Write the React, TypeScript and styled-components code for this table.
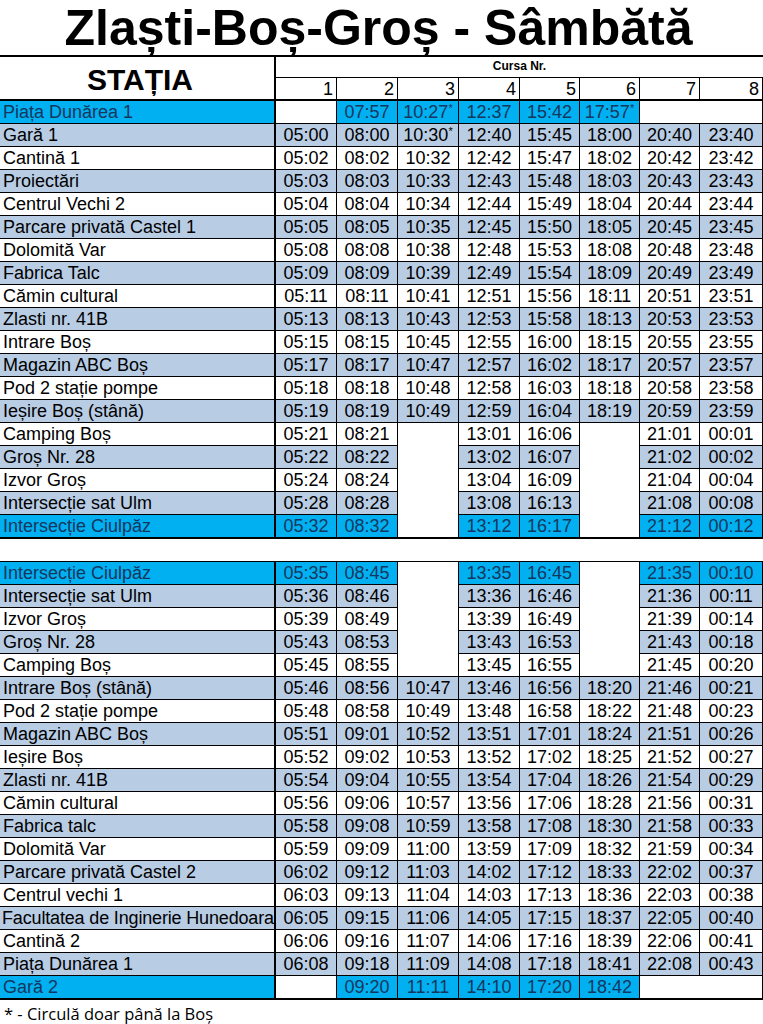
import React from "react";
import styled, { createGlobalStyle } from "styled-components";

const GlobalStyle = createGlobalStyle`
  html, body {
    margin: 0;
    padding: 0;
    background: #ffffff;
  }
  body {
    font-family: "Liberation Sans", Arial, sans-serif;
    color: #000;
  }
`;

type Tone = "white" | "light" | "bright";

type Stop = {
  name: string;
  tone: Tone;
  times: (string | null)[];
};

const COLS = "276px 61px 61px 61px 61px 60px 60px 60px 63px";

const toneBg: Record<Tone, string> = {
  white: "#ffffff",
  light: "#b8cce4",
  bright: "#00b0f0",
};

const toneInk: Record<Tone, string> = {
  white: "#000000",
  light: "#000000",
  bright: "#17365d",
};

const outbound: Stop[] = [
  { name: "Piața Dunărea 1", tone: "bright", times: [null, "07:57", "10:27*", "12:37", "15:42", "17:57*", null, null] },
  { name: "Gară 1", tone: "light", times: ["05:00", "08:00", "10:30*", "12:40", "15:45", "18:00", "20:40", "23:40"] },
  { name: "Cantină 1", tone: "white", times: ["05:02", "08:02", "10:32", "12:42", "15:47", "18:02", "20:42", "23:42"] },
  { name: "Proiectări", tone: "light", times: ["05:03", "08:03", "10:33", "12:43", "15:48", "18:03", "20:43", "23:43"] },
  { name: "Centrul Vechi 2", tone: "white", times: ["05:04", "08:04", "10:34", "12:44", "15:49", "18:04", "20:44", "23:44"] },
  { name: "Parcare privată Castel 1", tone: "light", times: ["05:05", "08:05", "10:35", "12:45", "15:50", "18:05", "20:45", "23:45"] },
  { name: "Dolomită Var", tone: "white", times: ["05:08", "08:08", "10:38", "12:48", "15:53", "18:08", "20:48", "23:48"] },
  { name: "Fabrica Talc", tone: "light", times: ["05:09", "08:09", "10:39", "12:49", "15:54", "18:09", "20:49", "23:49"] },
  { name: "Cămin cultural", tone: "white", times: ["05:11", "08:11", "10:41", "12:51", "15:56", "18:11", "20:51", "23:51"] },
  { name: "Zlasti nr. 41B", tone: "light", times: ["05:13", "08:13", "10:43", "12:53", "15:58", "18:13", "20:53", "23:53"] },
  { name: "Intrare Boș", tone: "white", times: ["05:15", "08:15", "10:45", "12:55", "16:00", "18:15", "20:55", "23:55"] },
  { name: "Magazin ABC Boș", tone: "light", times: ["05:17", "08:17", "10:47", "12:57", "16:02", "18:17", "20:57", "23:57"] },
  { name: "Pod 2 stație pompe", tone: "white", times: ["05:18", "08:18", "10:48", "12:58", "16:03", "18:18", "20:58", "23:58"] },
  { name: "Ieșire Boș (stână)", tone: "light", times: ["05:19", "08:19", "10:49", "12:59", "16:04", "18:19", "20:59", "23:59"] },
  { name: "Camping Boș", tone: "white", times: ["05:21", "08:21", null, "13:01", "16:06", null, "21:01", "00:01"] },
  { name: "Groș Nr. 28", tone: "light", times: ["05:22", "08:22", null, "13:02", "16:07", null, "21:02", "00:02"] },
  { name: "Izvor Groș", tone: "white", times: ["05:24", "08:24", null, "13:04", "16:09", null, "21:04", "00:04"] },
  { name: "Intersecție sat Ulm", tone: "light", times: ["05:28", "08:28", null, "13:08", "16:13", null, "21:08", "00:08"] },
  { name: "Intersecție Ciulpăz", tone: "bright", times: ["05:32", "08:32", null, "13:12", "16:17", null, "21:12", "00:12"] },
];

const inbound: Stop[] = [
  { name: "Intersecție Ciulpăz", tone: "bright", times: ["05:35", "08:45", null, "13:35", "16:45", null, "21:35", "00:10"] },
  { name: "Intersecție sat Ulm", tone: "light", times: ["05:36", "08:46", null, "13:36", "16:46", null, "21:36", "00:11"] },
  { name: "Izvor Groș", tone: "white", times: ["05:39", "08:49", null, "13:39", "16:49", null, "21:39", "00:14"] },
  { name: "Groș Nr. 28", tone: "light", times: ["05:43", "08:53", null, "13:43", "16:53", null, "21:43", "00:18"] },
  { name: "Camping Boș", tone: "white", times: ["05:45", "08:55", null, "13:45", "16:55", null, "21:45", "00:20"] },
  { name: "Intrare Boș (stână)", tone: "light", times: ["05:46", "08:56", "10:47", "13:46", "16:56", "18:20", "21:46", "00:21"] },
  { name: "Pod 2 stație pompe", tone: "white", times: ["05:48", "08:58", "10:49", "13:48", "16:58", "18:22", "21:48", "00:23"] },
  { name: "Magazin ABC Boș", tone: "light", times: ["05:51", "09:01", "10:52", "13:51", "17:01", "18:24", "21:51", "00:26"] },
  { name: "Ieșire Boș", tone: "white", times: ["05:52", "09:02", "10:53", "13:52", "17:02", "18:25", "21:52", "00:27"] },
  { name: "Zlasti nr. 41B", tone: "light", times: ["05:54", "09:04", "10:55", "13:54", "17:04", "18:26", "21:54", "00:29"] },
  { name: "Cămin cultural", tone: "white", times: ["05:56", "09:06", "10:57", "13:56", "17:06", "18:28", "21:56", "00:31"] },
  { name: "Fabrica talc", tone: "light", times: ["05:58", "09:08", "10:59", "13:58", "17:08", "18:30", "21:58", "00:33"] },
  { name: "Dolomită Var", tone: "white", times: ["05:59", "09:09", "11:00", "13:59", "17:09", "18:32", "21:59", "00:34"] },
  { name: "Parcare privată Castel 2", tone: "light", times: ["06:02", "09:12", "11:03", "14:02", "17:12", "18:33", "22:02", "00:37"] },
  { name: "Centrul vechi 1", tone: "white", times: ["06:03", "09:13", "11:04", "14:03", "17:13", "18:36", "22:03", "00:38"] },
  { name: "Facultatea de Inginerie Hunedoara", tone: "light", times: ["06:05", "09:15", "11:06", "14:05", "17:15", "18:37", "22:05", "00:40"] },
  { name: "Cantină 2", tone: "white", times: ["06:06", "09:16", "11:07", "14:06", "17:16", "18:39", "22:06", "00:41"] },
  { name: "Piața Dunărea 1", tone: "light", times: ["06:08", "09:18", "11:09", "14:08", "17:18", "18:41", "22:08", "00:43"] },
  { name: "Gară 2", tone: "bright", times: [null, "09:20", "11:11", "14:10", "17:20", "18:42", null, null] },
];

const Page = styled.div`
  width: 763px;
  height: 1024px;
  overflow: hidden;
  display: flex;
  flex-direction: column;
  background: #fff;
`;

const Title = styled.h1`
  margin: 0;
  height: 57px;
  box-sizing: border-box;
  border-bottom: 2px solid #000;
  font-size: 50px;
  font-weight: 700;
  line-height: 57px;
  text-align: center;
  padding-right: 6px;
`;

const Header = styled.div`
  display: grid;
  grid-template-columns: ${COLS};
  grid-template-rows: 21px 23px;
`;

const StationHead = styled.div`
  grid-row: span 2;
  box-sizing: border-box;
  border-right: 2px solid #000;
  border-bottom: 2px solid #000;
  display: flex;
  align-items: center;
  justify-content: center;
  font-size: 30px;
  font-weight: 700;
  padding: 3px 0 0 6px;
`;

const CourseHead = styled.div`
  grid-column: span 8;
  box-sizing: border-box;
  border-bottom: 1px solid #000;
  text-align: center;
  font-size: 12px;
  font-weight: 700;
  line-height: 19px;
`;

const CourseNo = styled.div`
  box-sizing: border-box;
  border-right: 1px solid #000;
  border-bottom: 2px solid #000;
  text-align: right;
  padding-right: 3px;
  font-size: 18px;
  line-height: 22px;
`;

const Section = styled.div<{ $last?: boolean }>`
  display: grid;
  grid-template-columns: ${COLS};
  grid-auto-rows: 23px;
  border-top: ${(p) => (p.$last ? "1px solid #000" : "none")};
  border-bottom: 1px solid #000;
`;

const Gap = styled.div`
  height: 22px;
  flex: none;
`;

const StationCell = styled.div<{ $tone: Tone; $tight?: boolean }>`
  box-sizing: border-box;
  background: ${(p) => toneBg[p.$tone]};
  color: ${(p) => toneInk[p.$tone]};
  border-right: 2px solid #000;
  border-bottom: 1px solid #000;
  padding-left: ${(p) => (p.$tight ? "2px" : "3px")};
  letter-spacing: ${(p) => (p.$tight ? "-0.16px" : "0")};
  font-size: 18px;
  line-height: 23px;
  white-space: nowrap;
  overflow: hidden;
`;

const TimeCell = styled.div<{ $tone: Tone }>`
  box-sizing: border-box;
  background: ${(p) => toneBg[p.$tone]};
  color: ${(p) => toneInk[p.$tone]};
  border-right: 1px solid #000;
  border-bottom: 1px solid #000;
  text-align: center;
  font-size: 18px;
  line-height: 23px;
  white-space: nowrap;
`;

const Star = styled.span`
  font-size: 11px;
  vertical-align: 6px;
  line-height: 0;
`;

const BlankCell = styled.div<{ $rows: number; $cols: number }>`
  grid-row: span ${(p) => p.$rows};
  grid-column: span ${(p) => p.$cols};
  background: #fff;
  box-sizing: border-box;
  border-right: 1px solid #000;
  border-bottom: 1px solid #000;
`;

const Note = styled.div`
  flex: 1;
  display: flex;
  align-items: center;
  padding: 2px 0 0 4px;
  font-family: "Open Sans", "Noto Sans", sans-serif;
  font-size: 16.5px;
`;

const renderTime = (t: string) =>
  t.endsWith("*") ? (
    <>
      {t.slice(0, -1)}
      <Star>*</Star>
    </>
  ) : (
    t
  );

const Block = ({ stops, last }: { stops: Stop[]; last?: boolean }) => {
  // mark cells swallowed by merged blanks
  const covered = stops.map(() => stops[0].times.map(() => false));
  const cells: React.ReactNode[] = [];

  stops.forEach((s, r) => {
    cells.push(
      <StationCell key={`s${r}`} $tone={s.tone} $tight={s.name.length > 28}>
        {s.name}
      </StationCell>
    );
    s.times.forEach((t, c) => {
      if (covered[r][c]) return;
      if (t !== null) {
        cells.push(
          <TimeCell key={`${r}-${c}`} $tone={s.tone}>
            {renderTime(t)}
          </TimeCell>
        );
        return;
      }
      let cols = 1;
      while (c + cols < s.times.length && s.times[c + cols] === null) cols++;
      let rows = 1;
      if (cols === 1) {
        while (r + rows < stops.length && stops[r + rows].times[c] === null) rows++;
      }
      for (let i = 0; i < rows; i++)
        for (let j = 0; j < cols; j++) covered[r + i][c + j] = true;
      cells.push(<BlankCell key={`${r}-${c}`} $rows={rows} $cols={cols} />);
    });
  });

  return <Section $last={last}>{cells}</Section>;
};

export default function App() {
  return (
    <>
      <GlobalStyle />
      <Page>
        <Title>Zlaști-Boș-Groș - Sâmbătă</Title>
        <Header>
          <StationHead>STAȚIA</StationHead>
          <CourseHead>Cursa Nr.</CourseHead>
          {[1, 2, 3, 4, 5, 6, 7, 8].map((n) => (
            <CourseNo key={n}>{n}</CourseNo>
          ))}
        </Header>
        <Block stops={outbound} />
        <Gap />
        <Block stops={inbound} last />
        <Note>* - Circulă doar până la Boș</Note>
      </Page>
    </>
  );
}
